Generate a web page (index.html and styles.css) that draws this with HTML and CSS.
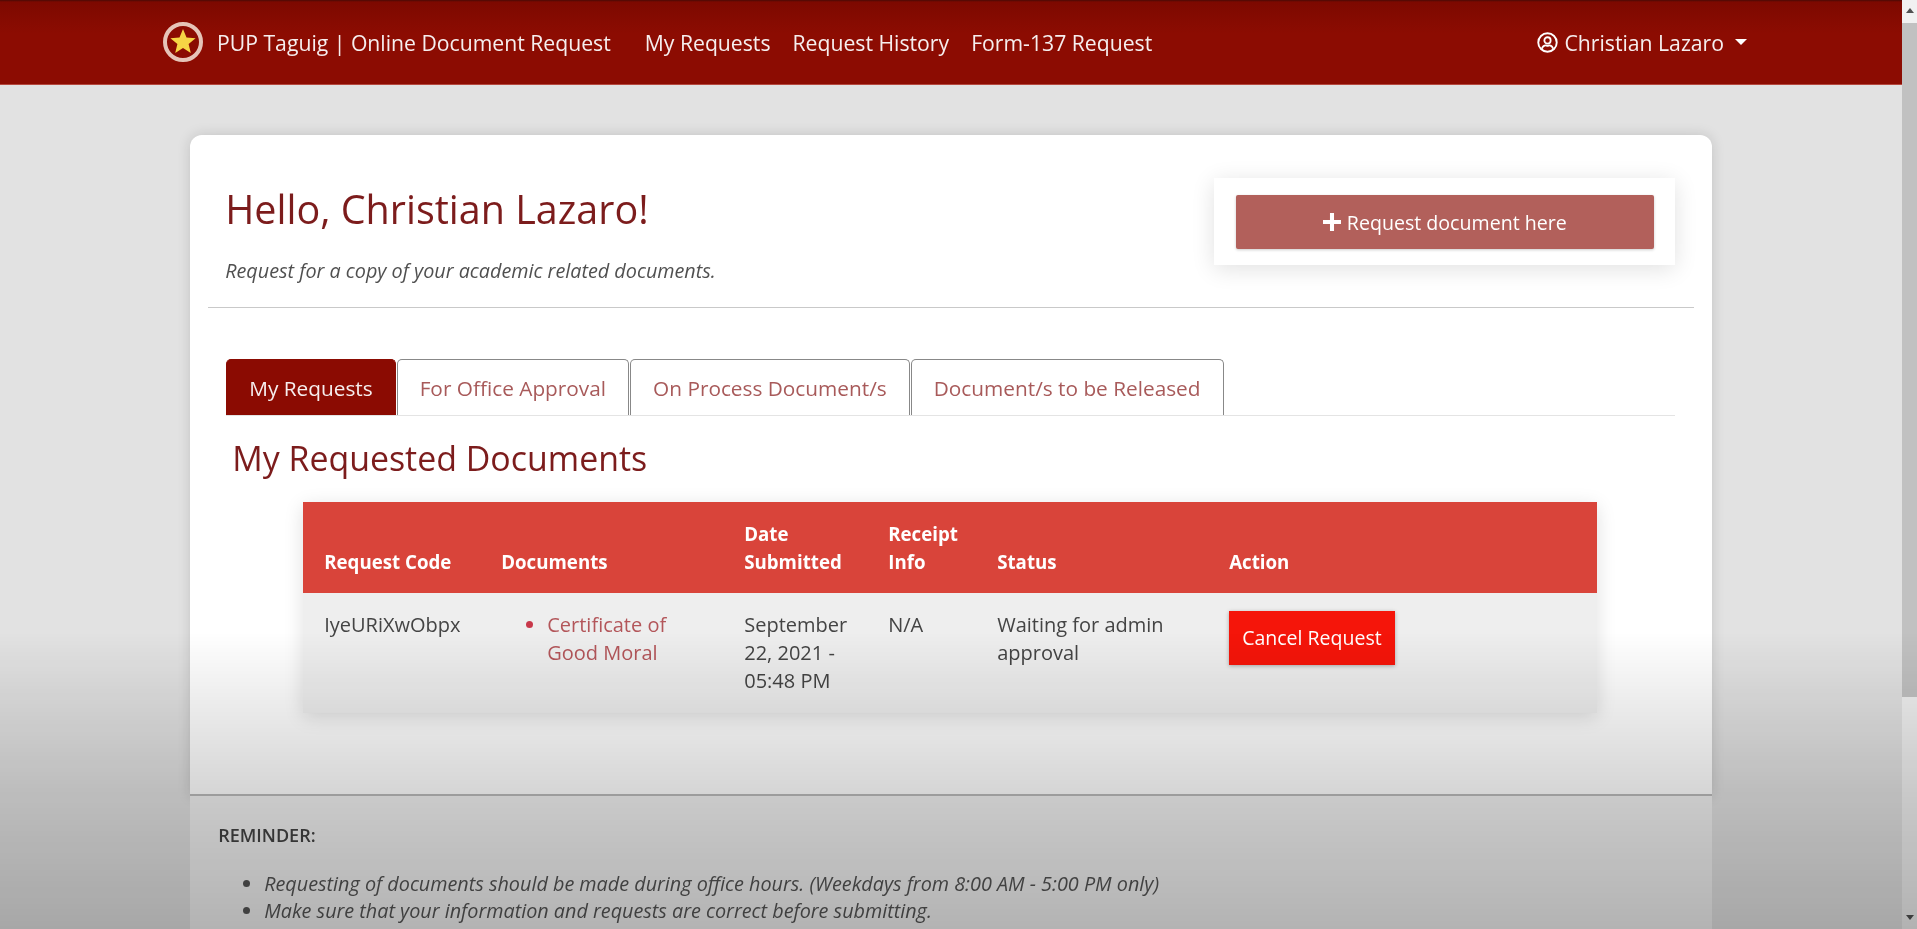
FILE: index.html
```html
<!DOCTYPE html>
<html>
<head>
    <meta charset="utf-8">
    <title>PUP Taguig | Online Document Request</title>
    <link rel="stylesheet" href="styles.css">
</head>
<body>
    <div class="page">
        <nav class="navbar">
            <a class="brand" href="#">
                <svg class="logo" viewBox="0 0 40 40">
                    <circle cx="20" cy="20" r="18" fill="#8b0b02" stroke="#e6c4b8" stroke-width="4"/>
                    <polygon points="20,7 23.5,15.6 32.6,16.2 25.6,22 27.8,31 20,26 12.2,31 14.4,22 7.4,16.2 16.5,15.6" fill="#f6d545"/>
                </svg>
                PUP Taguig | Online Document Request
            </a>
            <div class="nav-links">
                <a href="#">My Requests</a>
                <a href="#">Request History</a>
                <a href="#">Form-137 Request</a>
            </div>
            <a class="user" href="#">
                <svg class="user-icon" viewBox="0 0 20 20">
                    <circle cx="10" cy="10" r="8.8" fill="none" stroke="#fff" stroke-width="1.8"/>
                    <circle cx="10" cy="8" r="3" fill="none" stroke="#fff" stroke-width="1.7"/>
                    <path d="M4.6 16c.8-2.4 2.6-3.2 3.6-3.2.8 0 1 .4 1.8.4s1-.4 1.8-.4c1 0 2.800.8 3.600 3.200" fill="none" stroke="#fff" stroke-width="1.700"/>
                </svg>
                Christian Lazaro
                <span class="caret"></span>
            </a>
        </nav>

        <main class="container">
            <section class="card">
                <header class="card-head">
                    <div>
                        <h1>Hello, Christian Lazaro!</h1>
                        <p class="lead">Request for a copy of your academic related documents.</p>
                    </div>
                    <div class="request-box">
                        <a class="btn-request" href="#">
                            <svg class="plus" viewBox="0 0 16 16"><path d="M6.200 0h3.600v6.200H16v3.600H9.800V16H6.200V9.800H0V6.200h6.200z" fill="#fff"/></svg>
                            Request document here
                        </a>
                    </div>
                </header>

                <ul class="tabs">
                    <li class="tab active">My Requests</li>
                    <li class="tab">For Office Approval</li>
                    <li class="tab">On Process Document/s</li>
                    <li class="tab">Document/s to be Released</li>
                </ul>

                <h2>My Requested Documents</h2>

                <table class="requests">
                    <thead>
                        <tr>
                            <th class="col-code">Request Code</th>
                            <th class="col-docs">Documents</th>
                            <th class="col-date">Date Submitted</th>
                            <th class="col-receipt">Receipt Info</th>
                            <th class="col-status">Status</th>
                            <th>Action</th>
                        </tr>
                    </thead>
                    <tbody>
                        <tr>
                            <td>IyeURiXwObpx</td>
                            <td>
                                <ul class="doc-list">
                                    <li><a href="#">Certificate of Good Moral</a></li>
                                </ul>
                            </td>
                            <td>September 22, 2021 - 05:48 PM</td>
                            <td>N/A</td>
                            <td>Waiting for admin approval</td>
                            <td><a class="btn-cancel" href="#">Cancel Request</a></td>
                        </tr>
                    </tbody>
                </table>
            </section>

            <section class="reminder">
                <p class="reminder-title">REMINDER:</p>
                <ul>
                    <li>Requesting of documents should be made during office hours. (Weekdays from 8:00 AM - 5:00 PM only)</li>
                    <li>Make sure that your information and requests are correct before submitting.</li>
                </ul>
            </section>
        </main>
    </div>

    <div class="scrollbar">
        <span class="arrow up"></span>
        <span class="thumb"></span>
        <span class="arrow down"></span>
    </div>

    <div class="video-shade"></div>
</body>
</html>
```

FILE: styles.css
```css
* {
    box-sizing: border-box;
}
html, body {
    height: 100%;
    margin: 0;
    overflow: hidden;
}
body {
    display: flex;
    font-family: "Open Sans", Arial, sans-serif;
    font-size: 20px;
    color: #444;
    background: #e2e2e2;
}
a {
    color: inherit;
    text-decoration: none;
}
.page {
    flex: 1;
    min-width: 0;
    height: 100%;
    overflow: hidden;
    filter: blur(.4px);
}

/* navbar */
.navbar {
    display: flex;
    align-items: center;
    height: 85px;
    padding: 0 155px 0 163px;
    color: #f6eeee;
    font-size: 21.2px;
    background: linear-gradient(#4a0a05, #7d0900 2px, #8c0c02 40%);
    border-bottom: 1px solid #b5483e;
}
.brand {
    display: flex;
    align-items: center;
    gap: 14px;
}
.logo {
    width: 40px;
    height: 40px;
}
.nav-links {
    display: flex;
    gap: 22px;
    margin-left: 34px;
}
.user {
    display: flex;
    align-items: center;
    gap: 6px;
    margin-left: auto;
}
.user-icon {
    width: 21px;
    height: 21px;
}
.caret {
    margin-left: 5px;
    border-top: 6px solid #fff;
    border-left: 6px solid transparent;
    border-right: 6px solid transparent;
}

/* card */
.container {
    width: 80%;
    margin: 50px auto 0;
}
.card {
    height: 661px;
    padding: 0 18px;
    background: #fff;
    border-radius: 12px 12px 0 0;
    box-shadow: 0 0 14px rgba(0, 0, 0, .14);
    border-bottom: 2px solid #bbb;
}
.card-head {
    display: flex;
    justify-content: space-between;
    height: 173px;
    padding: 43px 19px 0 17px;
    border-bottom: 1px solid #c9c9c9;
}
h1 {
    margin: 5px 0 0;
    font-size: 39.5px;
    font-weight: 400;
    line-height: 52px;
    color: #7c1c1c;
}
.lead {
    margin: 22px 0 0;
    font-size: 19.8px;
    font-style: italic;
    color: #505050;
}
.request-box {
    width: 461px;
    height: 87px;
    padding: 17px 21px 0 22px;
    background: #fff;
    box-shadow: 0 4px 22px rgba(0, 0, 0, .12);
}
.btn-request {
    display: flex;
    align-items: center;
    justify-content: center;
    gap: 6px;
    height: 54px;
    color: #fff;
    font-size: 19.6px;
    background: #b2605b;
    border-radius: 2px;
    box-shadow: 0 1px 3px rgba(0, 0, 0, .2);
}
.plus {
    width: 18px;
    height: 18px;
}

/* tabs */
.tabs {
    display: flex;
    height: 57px;
    margin: 51px 19px 0 18px;
    padding: 0;
    list-style: none;
    border-bottom: 1px solid #e4e4e4;
}
.tab {
    margin-right: 1px;
    padding: 0 22px;
    line-height: 56px;
    font-size: 20.8px;
    color: #a85a5a;
    background: #fff;
    border: 1px solid #888;
    border-bottom: 0;
    border-radius: 5px 5px 0 0;
}
.tab.active {
    color: #f6eeee;
    background: #8b0b02;
    border-color: #8b0b02;
}
h2 {
    margin: 20px 0 0 24px;
    font-size: 33.9px;
    font-weight: 400;
    line-height: 44px;
    color: #7c1c1c;
}

/* table */
.requests {
    width: 1294px;
    margin: 22px 0 0 95px;
    table-layout: fixed;
    border-collapse: collapse;
    box-shadow: 0 4px 18px rgba(0, 0, 0, .13);
}
.requests th, .requests td {
    padding: 18px 21px;
    line-height: 28px;
    text-align: left;
}
.requests th {
    padding-bottom: 17px;
    vertical-align: bottom;
    font-size: 18.7px;
    color: #fff;
    background: #d9443a;
}
.requests td {
    vertical-align: top;
    color: #444;
    background: #eee;
}
.col-code { width: 177px; }
.col-docs { width: 243px; }
.col-date { width: 144px; }
.col-receipt { width: 109px; }
.col-status { width: 232px; }
.doc-list {
    margin: 0;
    padding-left: 46px;
    color: #c8384a;
}
.doc-list a {
    color: #b3565a;
}
.requests td .btn-cancel {
    display: inline-block;
    padding: 13px;
    font-size: 19.5px;
    color: #fff;
    background: #f5150a;
    box-shadow: 0 1px 4px rgba(0, 0, 0, .3);
}

/* reminder */
.reminder {
    padding: 27px 28px;
    font-size: 19.8px;
    color: #555;
    background: #f2f2f2;
}
.reminder-title {
    margin: 0 0 23px;
    font-size: 18px;
    font-weight: 600;
    color: #444;
}
.reminder ul {
    margin: 0;
    padding-left: 46px;
    font-style: italic;
    line-height: 27px;
}

/* scrollbar */
.scrollbar {
    display: flex;
    flex-direction: column;
    align-items: center;
    flex: 0 0 15px;
    background: #f1f1f1;
}
.thumb {
    width: 100%;
    height: 674px;
    background: #c1c1c1;
}
.arrow {
    width: 0;
    height: 0;
    border-left: 4px solid transparent;
    border-right: 4px solid transparent;
}
.arrow.up {
    margin: 8px 0 10px;
    border-bottom: 5px solid #505050;
}
.arrow.down {
    margin: auto 0 9px;
    border-top: 5px solid #505050;
}

.video-shade {
    position: fixed;
    inset: 0;
    pointer-events: none;
    background: linear-gradient(transparent 68%, rgba(0, 0, 0, .08) 76%, rgba(0, 0, 0, .165) 85.5%, rgba(0, 0, 0, .26));
}
```
